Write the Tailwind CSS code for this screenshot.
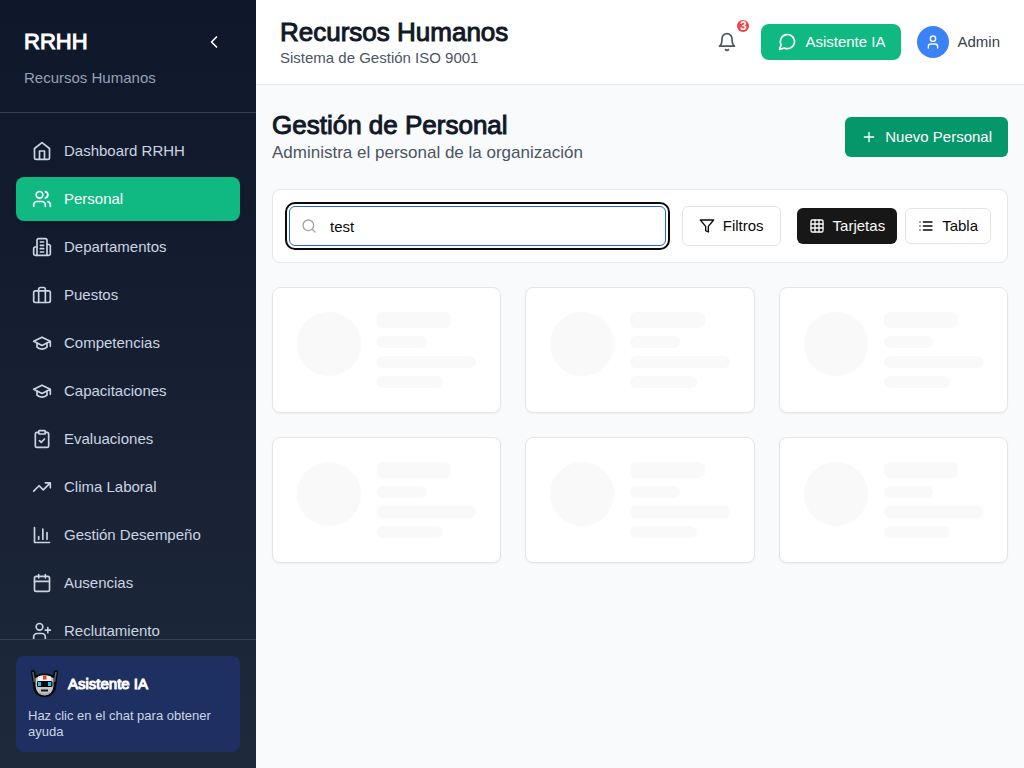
<!DOCTYPE html>
<html lang="es">
<head>
<meta charset="utf-8">
<meta name="viewport" content="width=device-width, initial-scale=1">
<title>Recursos Humanos</title>
<script src="https://cdn.jsdelivr.net/npm/@tailwindcss/browser@4"></script>
</head>
<body class="flex h-screen overflow-hidden bg-[#f9fafb] font-['Liberation_Sans',Arial,sans-serif] text-[15px] leading-5">

<!-- Shared icon shapes -->
<svg class="hidden" aria-hidden="true">
  <symbol id="i-left" viewBox="0 0 24 24"><path d="m15 18-6-6 6-6"/></symbol>
  <symbol id="i-home" viewBox="0 0 24 24"><path d="m3 9 9-7 9 7v11a2 2 0 0 1-2 2H5a2 2 0 0 1-2-2z"/><path d="M9 22V12h6v10"/></symbol>
  <symbol id="i-users" viewBox="0 0 24 24"><path d="M16 21v-2a4 4 0 0 0-4-4H6a4 4 0 0 0-4 4v2"/><circle cx="9" cy="7" r="4"/><path d="M22 21v-2a4 4 0 0 0-3-3.870M16 3.130a4 4 0 0 1 0 7.750"/></symbol>
  <symbol id="i-building" viewBox="0 0 24 24"><path d="M6 22V4a2 2 0 0 1 2-2h8a2 2 0 0 1 2 2v18Z"/><path d="M6 12H4a2 2 0 0 0-2 2v6a2 2 0 0 0 2 2h2M18 9h2a2 2 0 0 1 2 2v9a2 2 0 0 1-2 2h-2M10 6h4M10 10h4M10 14h4M10 18h4"/></symbol>
  <symbol id="i-case" viewBox="0 0 24 24"><path d="M16 21V5a2 2 0 0 0-2-2h-4a2 2 0 0 0-2 2v16"/><rect x="2" y="7" width="20" height="14" rx="2"/></symbol>
  <symbol id="i-cap" viewBox="0 0 24 24"><path d="M22 10v6M2 10l10-5 10 5-10 5z"/><path d="M6 12v5c3 3 9 3 12 0v-5"/></symbol>
  <symbol id="i-clip" viewBox="0 0 24 24"><rect x="8" y="2" width="8" height="4" rx="1"/><path d="M16 4h2a2 2 0 0 1 2 2v14a2 2 0 0 1-2 2H6a2 2 0 0 1-2-2V6a2 2 0 0 1 2-2h2M9 14l2 2 4-4"/></symbol>
  <symbol id="i-trend" viewBox="0 0 24 24"><path d="M22 7l-8.500 8.500-5-5L2 17M16 7h6v6"/></symbol>
  <symbol id="i-chart" viewBox="0 0 24 24"><path d="M3 3v18h18M18 17V9M13 17V5M8 17v-3"/></symbol>
  <symbol id="i-cal" viewBox="0 0 24 24"><path d="M8 2v4M16 2v4M3 10h18"/><rect x="3" y="4" width="18" height="18" rx="2"/></symbol>
  <symbol id="i-uplus" viewBox="0 0 24 24"><path d="M16 21v-2a4 4 0 0 0-4-4H6a4 4 0 0 0-4 4v2M19 8v6M22 11h-6"/><circle cx="9" cy="7" r="4"/></symbol>
  <symbol id="i-bell" viewBox="0 0 24 24"><path d="M6 8a6 6 0 0 1 12 0c0 7 3 9 3 9H3s3-2 3-9M10.300 21a1.940 1.940 0 0 0 3.400 0"/></symbol>
  <symbol id="i-chat" viewBox="0 0 24 24"><path d="m3 21 1.900-5.700a8.500 8.500 0 1 1 3.800 3.800z"/></symbol>
  <symbol id="i-user" viewBox="0 0 24 24"><path d="M19 21v-2a4 4 0 0 0-4-4H9a4 4 0 0 0-4 4v2"/><circle cx="12" cy="7" r="4"/></symbol>
  <symbol id="i-plus" viewBox="0 0 24 24"><path d="M5 12h14M12 5v14"/></symbol>
  <symbol id="i-search" viewBox="0 0 24 24"><circle cx="11" cy="11" r="8"/><path d="m21 21-4.300-4.300"/></symbol>
  <symbol id="i-filter" viewBox="0 0 24 24"><path d="M22 3H2l8 9.460V19l4 2v-8.540z"/></symbol>
  <symbol id="i-grid" viewBox="0 0 24 24"><rect x="3" y="3" width="18" height="18" rx="2"/><path d="M3 9h18M3 15h18M9 3v18M15 3v18"/></symbol>
  <symbol id="i-list" viewBox="0 0 24 24"><path d="M3 12h.01M3 18h.01M3 6h.01M8 12h13M8 18h13M8 6h13"/></symbol>
</svg>

<aside class="flex h-full w-64 shrink-0 flex-col bg-linear-to-b from-[#0f172a] to-[#1e293b] text-[#cbd5e1]">
  <div class="border-b border-[#334155] p-6">
    <div class="flex h-9 items-center justify-between">
      <h2 class="text-[22px] leading-8 text-white [-webkit-text-stroke:1px_white]">RRHH</h2>
      <button type="button" aria-label="Contraer menú" class="grid size-9 place-items-center text-white"><svg class="size-5 fill-none stroke-current stroke-2" stroke-linecap="round" stroke-linejoin="round"><use href="#i-left"/></svg></button>
    </div>
    <p class="mt-2 leading-5 text-[#94a3b8]">Recursos Humanos</p>
  </div>
  <nav class="flex min-h-0 flex-1 flex-col gap-1 overflow-hidden p-4 [&_a]:flex [&_a]:h-11 [&_a]:shrink-0 [&_a]:items-center [&_a]:gap-3 [&_a]:rounded-lg [&_a]:px-4 [&_svg]:size-5 [&_svg]:fill-none [&_svg]:stroke-current [&_svg]:stroke-2 [&_svg]:[stroke-linecap:round] [&_svg]:[stroke-linejoin:round]">
    <a href="#"><svg><use href="#i-home"/></svg>Dashboard RRHH</a>
    <a href="#" aria-current="page" class="bg-[#10b981] text-white shadow-lg"><svg><use href="#i-users"/></svg>Personal</a>
    <a href="#"><svg><use href="#i-building"/></svg>Departamentos</a>
    <a href="#"><svg><use href="#i-case"/></svg>Puestos</a>
    <a href="#"><svg><use href="#i-cap"/></svg>Competencias</a>
    <a href="#"><svg><use href="#i-cap"/></svg>Capacitaciones</a>
    <a href="#"><svg><use href="#i-clip"/></svg>Evaluaciones</a>
    <a href="#"><svg><use href="#i-trend"/></svg>Clima Laboral</a>
    <a href="#"><svg><use href="#i-chart"/></svg>Gestión Desempeño</a>
    <a href="#"><svg><use href="#i-cal"/></svg>Ausencias</a>
    <a href="#"><svg><use href="#i-uplus"/></svg>Reclutamiento</a>
  </nav>
  <div class="border-t border-[#334155] p-4">
    <div class="rounded-lg bg-[#1e3062] p-3">
      <div class="flex items-center gap-2">
        <svg class="size-8" viewBox="0 0 32 32" aria-hidden="true">
          <path d="M3 4Q3 2 5 2T7.500 4L8 7Q16 4 25 7L25.500 4Q26 2 28 2T30 4L28.500 16Q28 29 16.500 29Q5 29 5 17Z" fill="#07090d"/>
          <path d="M5 4L6.500 14M28 4L26.500 14" stroke="#5d6168" stroke-width="1.500"/>
          <path d="M7.500 10Q16 5 25.500 10L25.500 18Q24.500 27 16.500 27.500Q8.500 27 7.500 18Z" fill="#c5c6ca"/>
          <path d="M10 8.500Q16 6 23 8.500V13H10Z" fill="#f2f2f3"/>
          <path d="M15 7.500h3.500v4H15z" fill="#f03e1c"/>
          <rect x="9" y="13" width="15.500" height="6" rx="1.500" fill="#05080c"/>
          <path d="M10 14h3v4h-3zM20 14h3v4h-3z" fill="#22c4eb"/>
          <path d="M13 22.500h7" stroke="#16191f" stroke-width="2"/>
          <path d="M11 24.500Q16 28 22 24.500" fill="none" stroke="#999ca3"/>
        </svg>
        <span class="text-white [-webkit-text-stroke:1px_white]">Asistente IA</span>
      </div>
      <p class="mt-2 text-[13px] leading-4">Haz clic en el chat para obtener ayuda</p>
    </div>
  </div>
</aside>

<div class="flex min-w-0 flex-1 flex-col [&_svg]:shrink-0 [&_svg]:fill-none [&_svg]:stroke-current [&_svg]:stroke-2 [&_svg]:[stroke-linecap:round] [&_svg]:[stroke-linejoin:round]">
  <header class="flex items-center justify-between border-b border-[#e5e7eb] bg-white px-6 py-4">
    <div>
      <h1 class="text-[26px] leading-8 text-[#111827] [-webkit-text-stroke:1px_#111827]">Recursos Humanos</h1>
      <p class="leading-5 text-[#4b5563]">Sistema de Gestión ISO 9001</p>
    </div>
    <div class="flex items-center gap-4">
      <button type="button" aria-label="Notificaciones" class="relative p-2 text-[#4b5563]"><svg class="size-5"><use href="#i-bell"/></svg><span class="absolute -top-1 -right-1 grid size-3 place-items-center rounded-full bg-[#ef4444] text-[12px] leading-3 font-bold text-white">3</span></button>
      <button type="button" class="flex h-9 items-center gap-2 rounded-lg bg-[#10b981] px-4 text-white"><svg class="size-5"><use href="#i-chat"/></svg>Asistente IA</button>
      <div class="flex items-center gap-2 text-[#374151]">
        <span class="grid size-8 place-items-center rounded-full bg-[#3b82f6] text-white"><svg class="size-4"><use href="#i-user"/></svg></span>
        <span>Admin</span>
      </div>
    </div>
  </header>

  <main class="flex flex-1 flex-col gap-6 overflow-hidden px-4 py-6">
    <div class="flex items-center justify-between">
      <div>
        <h2 class="text-[26px] leading-8 text-[#111827] [-webkit-text-stroke:1px_#111827]">Gestión de Personal</h2>
        <p class="text-[17px] leading-6 text-[#4b5563]">Administra el personal de la organización</p>
      </div>
      <button type="button" class="flex h-10 items-center gap-2 rounded-md bg-[#059669] px-4 text-white"><svg class="size-4"><use href="#i-plus"/></svg>Nuevo Personal</button>
    </div>

    <div class="flex items-center gap-4 rounded-lg border border-[#e5e7eb] bg-white p-4 text-[#0a0a0a]">
      <div class="relative flex-1">
        <svg class="absolute top-3 left-3 size-4 text-[#9ca3af]"><use href="#i-search"/></svg>
        <input type="text" value="test" aria-label="Buscar personal" class="block h-10 w-full rounded-md border border-[#2563eb] bg-transparent pr-3 pl-10 outline-2 outline-offset-2 outline-[#0a0a0a]">
      </div>
      <button type="button" class="flex h-10 items-center gap-2 rounded-md border border-[#e5e5e5] px-4"><svg class="size-4"><use href="#i-filter"/></svg>Filtros</button>
      <div class="flex gap-2">
        <button type="button" class="flex h-9 items-center gap-2 rounded-md bg-[#171717] px-3 text-[#fafafa]"><svg class="size-4"><use href="#i-grid"/></svg>Tarjetas</button>
        <button type="button" class="flex h-9 items-center gap-2 rounded-md border border-[#e5e5e5] px-3"><svg class="size-4"><use href="#i-list"/></svg>Tabla</button>
      </div>
    </div>

    <!-- Loading placeholders -->
    <div id="cards" class="grid grid-cols-3 gap-6" aria-busy="true">
      <template>
        <div class="flex gap-4 rounded-lg border border-[#e5e5e5] bg-white p-6 shadow-xs">
          <div class="size-16 shrink-0 rounded-full bg-[#f9f9f9]"></div>
          <div class="flex flex-1 flex-col gap-2">
            <div class="h-4 w-3/4 rounded-md bg-[#f9f9f9]"></div>
            <div class="h-3 w-1/2 rounded-md bg-[#f9f9f9]"></div>
            <div class="h-3 w-full rounded-md bg-[#f9f9f9]"></div>
            <div class="h-3 w-2/3 rounded-md bg-[#f9f9f9]"></div>
          </div>
        </div>
      </template>
    </div>
  </main>
</div>
<script>
  const cards = document.getElementById('cards');
  const tpl = cards.querySelector('template');
  for (let i = 0; i < 6; i++) cards.append(tpl.content.cloneNode(true));
</script>
</body>
</html>
